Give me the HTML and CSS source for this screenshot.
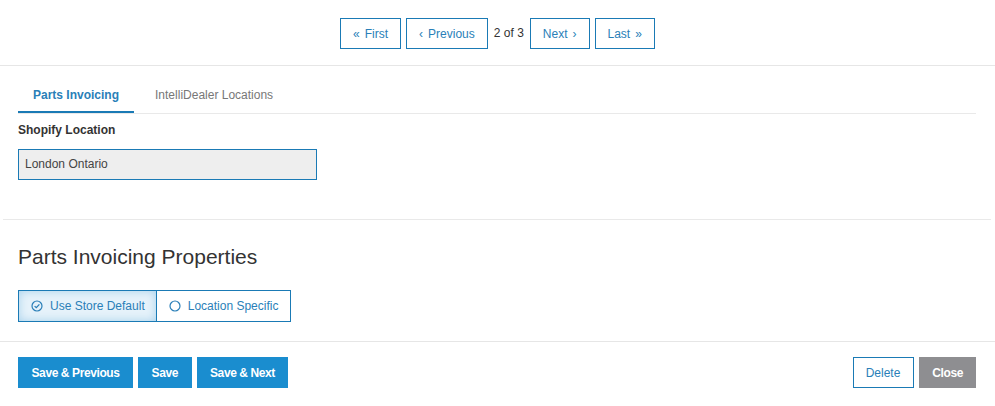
FILE: index.html
```html
<!DOCTYPE html>
<html lang="en">
<head>
	<meta charset="UTF-8">
	<meta name="viewport" content="width=device-width, initial-scale=1.0">
	<link rel="stylesheet" href="styles.css">
</head>
<body>
	<div class="pager">
		<button class="pager-btn"><span>&laquo;</span><span>First</span></button>
		<button class="pager-btn"><span>&lsaquo;</span><span>Previous</span></button>
		<span class="pager-count">2 of 3</span>
		<button class="pager-btn"><span>Next</span><span>&rsaquo;</span></button>
		<button class="pager-btn"><span>Last</span><span>&raquo;</span></button>
	</div>

	<div class="content">
		<div class="tabs">
			<a class="tab active">Parts Invoicing</a>
			<a class="tab">IntelliDealer Locations</a>
		</div>
		<label class="field-label">Shopify Location</label>
		<div class="field-input">London Ontario</div>
	</div>

	<div class="divider"></div>

	<div class="content">
		<h2 class="section-title">Parts Invoicing Properties</h2>
		<div class="toggle-group">
			<button class="toggle active">
				<svg width="12" height="12" viewBox="0 0 12 12">
					<circle cx="6" cy="6" r="5" fill="none" stroke="currentColor" stroke-width="1.2"/>
					<path d="M3.6 6.1 L5.3 7.7 L8.4 4.4" fill="none" stroke="currentColor" stroke-width="1.3"/>
				</svg>
				Use Store Default
			</button>
			<button class="toggle">
				<svg width="12" height="12" viewBox="0 0 12 12">
					<circle cx="6" cy="6" r="5" fill="none" stroke="currentColor" stroke-width="1.2"/>
				</svg>
				Location Specific
			</button>
		</div>
	</div>

	<div class="footer">
		<div class="footer-left">
			<button class="btn primary">Save &amp; Previous</button>
			<button class="btn primary">Save</button>
			<button class="btn primary">Save &amp; Next</button>
		</div>
		<div class="footer-right">
			<button class="btn outline">Delete</button>
			<button class="btn grey">Close</button>
		</div>
	</div>
</body>
</html>
```

FILE: styles.css
```css
* {
	margin: 0;
	padding: 0;
	box-sizing: border-box;
	font-family: "Liberation Sans", Arial, sans-serif;
}

body {
	background: #fff;
	color: #333;
	font-size: 12px;
}

button {
	font-size: 12px;
	cursor: pointer;
	background: none;
	white-space: nowrap;
}

.pager {
	display: flex;
	justify-content: center;
	align-items: flex-start;
	gap: 5px;
	height: 66px;
	padding-top: 18px;
	border-bottom: 1px solid #e6e6e6;
}

.pager-btn {
	display: flex;
	align-items: center;
	gap: 5px;
	height: 31px;
	padding: 0 12px;
	border: 1px solid #1a7ab5;
	color: #2a7fb8;
}

.pager-count {
	padding: 0 1px;
	line-height: 31px;
	color: #333;
}

.content {
	padding: 0 19px 0 18px;
}

.tabs {
	display: flex;
	gap: 6px;
	margin-top: 15px;
	border-bottom: 1px solid #e9e9e9;
}

.tab {
	padding: 7px 15px 9px;
	line-height: 14px;
	color: #777;
	border-bottom: 2px solid transparent;
}

.tab.active {
	font-weight: bold;
	color: #2a7fb8;
	border-bottom-color: #1a7ab5;
}

.field-label {
	display: block;
	margin-top: 9px;
	line-height: 14px;
	font-weight: bold;
	color: #333;
}

.field-input {
	width: 299px;
	height: 31px;
	margin-top: 12px;
	padding: 0 6px;
	line-height: 29px;
	background: #eee;
	border: 1px solid #1a7ab5;
	color: #444;
}

.divider {
	height: 1px;
	margin: 39px 4px 0 3px;
	background: #e9e9e9;
}

.section-title {
	margin-top: 25px;
	font-size: 21px;
	font-weight: normal;
	line-height: 24px;
	color: #333;
}

.toggle-group {
	display: flex;
	margin-top: 21px;
	margin-bottom: 19px;
}

.toggle {
	display: flex;
	align-items: center;
	gap: 7px;
	height: 32px;
	padding: 0 12px;
	border: 1px solid #1a7ab5;
	color: #2a7fb8;
	background: #fff;
}

.toggle.active {
	padding-right: 11px;
	background: #e6f2fa;
	box-shadow: inset 0 0 10px #a9d2ec;
}

.toggle + .toggle {
	border-left: none;
}

.toggle svg {
	flex: none;
}

.footer {
	display: flex;
	justify-content: space-between;
	padding: 15px 19px 0 18px;
	border-top: 1px solid #e6e6e6;
}

.footer-left,
.footer-right {
	display: flex;
	gap: 5px;
}

.btn {
	height: 31px;
	padding: 0 12.5px;
	font-weight: bold;
	letter-spacing: -0.4px;
	border: 1px solid transparent;
}

.btn.primary {
	background: #1a8dcf;
	color: #fff;
}

.btn.outline {
	border-color: #1a7ab5;
	color: #2a7fb8;
	font-weight: normal;
	letter-spacing: 0;
	padding: 0 13px 0 12px;
}

.btn.grey {
	background: #8e8e91;
	color: #fff;
	padding: 0 12px;
}
```
